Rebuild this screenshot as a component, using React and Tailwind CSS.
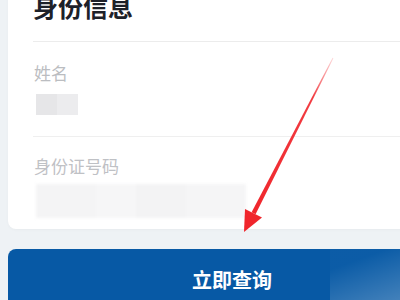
import React from "react";

export default function App() {
  return (
    <div className="relative w-[400px] h-[300px] overflow-hidden bg-[#eef2f5] pl-[8px]" style={{ fontFamily: '"Noto Sans CJK SC", "Noto Sans", sans-serif' }}>
      <div className="w-[448px] -mt-[26px] bg-white rounded-[8px] pt-[16px] pb-[11px] px-[25px] shadow-[0_1px_3px_rgba(0,0,0,0.03)]">
        <div className="text-[25px] leading-[32px] font-bold text-[#1d2129] tracking-[0px]">身份信息</div>
        <div className="mt-[19px] border-b border-[#ececec]" />
        <div className="pt-[19px] pb-[21px] border-b border-[#efefef]">
          <div className="text-[17px] leading-[24px] text-[#bbbdc1] pl-[1px]">姓名</div>
          <div className="mt-[9px] ml-[3px] flex h-[21px] blur-[0.6px]">
            <div className="w-[21px] bg-[#e6e6e8]" />
            <div className="w-[21px] bg-[#ececee]" />
          </div>
        </div>
        <div className="pt-[17px]">
          <div className="text-[17px] leading-[24px] text-[#bfc1c5] pl-[1px]">身份证号码</div>
          <div className="mt-[6px] ml-[3px] flex h-[34px] blur-[1.5px]">
            <div className="w-[60px] bg-[#f4f4f5]" />
            <div className="w-[40px] bg-[#f6f6f7]" />
            <div className="w-[50px] bg-[#f3f3f4]" />
            <div className="w-[60px] bg-[#f5f5f6]" />
          </div>
        </div>
      </div>
      <div className="relative mt-[20px] w-[448px] h-[58px] rounded-[8px] bg-[#0759a5] overflow-hidden flex items-center justify-center pt-[3px]">
        <div className="absolute left-[322px] top-0 bottom-0 right-0 bg-[linear-gradient(160deg,rgba(255,255,255,0.02)_20%,rgba(255,255,255,0.35)_100%)]" />
        <span className="relative text-white text-[20px] font-bold leading-none tracking-[0px]">立即查询</span>
      </div>
      <svg className="absolute left-0 top-0 pointer-events-none" width="400" height="300" viewBox="0 0 400 300">
        <defs>
          <linearGradient id="sh" x1="333" y1="58" x2="252" y2="214" gradientUnits="userSpaceOnUse">
            <stop offset="0" stopColor="#f33a3f" stopOpacity="0.2" />
            <stop offset="0.25" stopColor="#f0262c" stopOpacity="0.9" />
            <stop offset="1" stopColor="#f0262c" />
          </linearGradient>
        </defs>
        <polygon points="332.6,57.8 333.4,58.2 255.6,214.3 251.6,212.3" fill="url(#sh)" />
        <polygon points="244,232 245,209 262,217.6" fill="#f0262c" />
      </svg>
    </div>
  );
}
